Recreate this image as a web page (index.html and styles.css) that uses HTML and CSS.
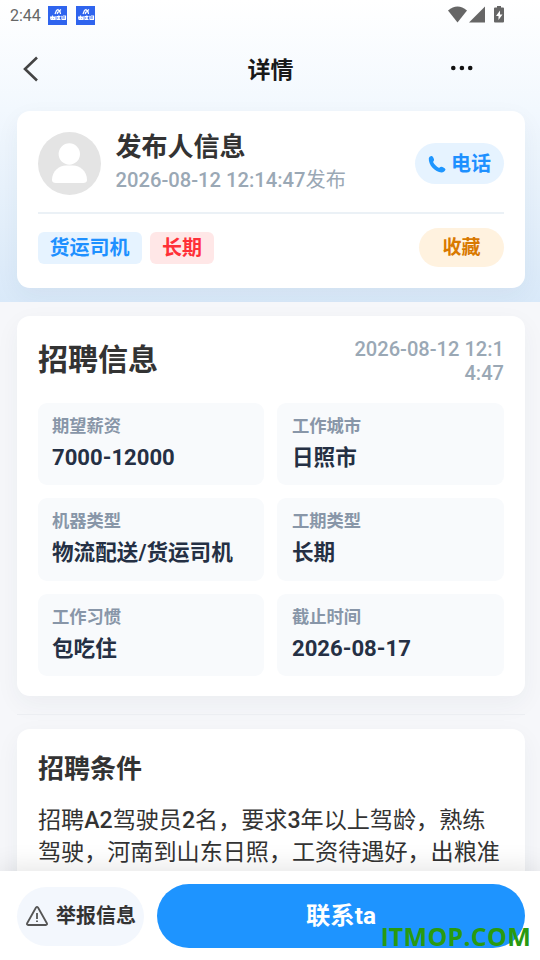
FILE: index.html
```html
<!DOCTYPE html>
<html lang="zh-CN">
<head>
<meta charset="utf-8">
<title>详情</title>
<link rel="stylesheet" href="styles.css">
</head>
<body>
<div class="screen">
  <div class="hero">
    <div class="status">
      <span class="clock">2:44</span>
      <svg class="app" viewBox="0 0 19 19"><use href="#app"/></svg>
      <svg class="app" viewBox="0 0 19 19"><use href="#app"/></svg>
      <svg class="signals" viewBox="0 0 58 18" width="58" height="18" fill="#666">
        <path d="M0 4.500Q9.500 -3.500 19 4.500L9.500 16.500Z"/>
        <path d="M21 16.500H37V.500Z"/>
        <path d="M49 1.500V0h4v1.500h2q1 0 1 1V15.500q0 1-1 1h-8q-1 0-1-1V2.500q0-1 1-1Z"/>
        <path d="M52 4.500L48 10h2.500v4L54.500 8.500H52Z" fill="#fff"/>
      </svg>
    </div>
    <div class="nav">
      <svg class="back" viewBox="0 0 16 26" width="16" height="26" fill="none" stroke="#444" stroke-width="2.600"><path d="M14 1.500L2 13L14 24.500"/></svg>
      <h1>详情</h1>
      <svg class="more" viewBox="0 0 24 6" width="24" height="6" fill="#111"><circle cx="3.300" cy="3" r="2.300"/><circle cx="11.900" cy="3" r="2.300"/><circle cx="20.200" cy="3" r="2.300"/></svg>
    </div>
    <section class="card publisher">
      <div class="person">
        <svg class="avatar" viewBox="0 0 63 63" width="63" height="63"><circle cx="31.500" cy="31.500" r="31.500" fill="#e4e4e4"/><circle cx="31.300" cy="22" r="10.700" fill="#fff"/><path d="M14 48C14 39 21 33.500 28 33.500H35C42 33.500 49 39 49 48Q49 51 45 51H18Q14 51 14 48Z" fill="#fff"/></svg>
        <div class="who"><h2>发布人信息</h2><p>2026-08-12 12:14:47<span>发布</span></p></div>
        <button class="phone"><svg viewBox="0 0 18 18" width="18" height="18" fill="#1e96ff"><path d="M.8 3.200C1.500 1.200 3.500.400 4.300 1.200C5.500 2.600 6.300 4.200 6 5.200C5.800 6 5 6.300 5.200 7.200C6 9 8.700 11.800 10.700 12.800C11.700 13.100 12 11.900 13.100 11.800C14.600 11.700 17.300 13.500 17.500 14.500C17.300 16 15.500 17.500 13.500 17.500C7 17 .3 10 .8 3.200Z"/></svg>电话</button>
      </div>
      <div class="tags"><span class="tag">货运司机</span><span class="tag red">长期</span><button class="favorite">收藏</button></div>
    </section>
  </div>
  <section class="card job">
    <header><h2>招聘信息</h2><time>2026-08-12 12:14:47</time></header>
    <div class="facts">
      <div class="fact"><span>期望薪资</span><b class="figure">7000-12000</b></div>
      <div class="fact"><span>工作城市</span><b>日照市</b></div>
      <div class="fact"><span>机器类型</span><b>物流配送/货运司机</b></div>
      <div class="fact"><span>工期类型</span><b>长期</b></div>
      <div class="fact"><span>工作习惯</span><b>包吃住</b></div>
      <div class="fact"><span>截止时间</span><b class="figure">2026-08-17</b></div>
    </div>
  </section>
  <hr>
  <section class="card terms">
    <h2>招聘条件</h2>
    <p>招聘<i>A2</i>驾驶员<i>2</i>名，要求<i>3</i>年以上驾龄，熟练驾驶，河南到山东日照，工资待遇好，出粮准</p>
  </section>
  <footer>
    <button class="report"><svg viewBox="0 0 22 20" width="22" height="20" fill="none" stroke="#555" stroke-width="1.800" stroke-linejoin="round"><path d="M10 1.500Q11 .300 12 1.500L21 17.500Q21.200 19 20 19H2Q.8 19 1 17.500Z"/><path d="M11 7V13M11 14.500V16"/></svg>举报信息</button>
    <button class="contact">联系ta</button>
  </footer>
  <div class="watermark"><span>I</span>TMOP.COM</div>
</div>
<svg width="0" height="0" class="defs"><defs><g id="app"><rect width="19" height="19" fill="#2f64ee"/><g fill="none" stroke="#fff" stroke-width="1.200"><path d="M7 8L8.500 4.500L10 3.500L11 5L13 3.500M9 6.500L12 5.500L12.500 8M9 8L10 6.500"/><path d="M2 11H7M4.500 9.500V13M2.800 13.500V12H6.500V13.500H2.800M8 10V14M9 10.500H12.500M9 13.500H12.500M9 12H12M10.800 9.500V14M13.500 10L14.500 11M13.500 13.500H18M15 10H17.500V13M15 12H17.500M14 11V13"/></g></g></defs></svg>
</body>
</html>
```
FILE: styles.css
```css
* { box-sizing: border-box; margin: 0; padding: 0; }
body { width: 540px; height: 960px; overflow: hidden; font-family: Roboto, "Noto Sans CJK SC", sans-serif; color: #333; background: #f6f7fa; }
button { border: 0; font: inherit; line-height: 30px; display: flex; align-items: center; justify-content: center; }
h1, h2 { font-weight: 700; }
.defs { position: absolute; }
.screen { position: relative; height: 960px; overflow: hidden; }
.hero { height: 302px; padding: 0 15px 0 17px; background: linear-gradient(#fff 0, #f2f8fe 110px, #d9e9f9 302px); overflow: hidden; }
.status { display: flex; height: 32px; align-items: center; margin-left: -7px; }
.clock { font-size: 16px; color: #666; width: 38px; margin-top: -1px; }
.app { width: 19px; height: 19px; margin-right: 9px; margin-top: -1px; }
.signals { margin-left: auto; margin-right: 19px; margin-top: -3px; }
.nav { display: grid; grid-template-columns: 1fr auto 1fr; height: 79px; align-items: center; padding: 0 51px 4px 6px; }
.back { margin-top: -2px; }
.nav h1 { font-size: 23px; line-height: 30px; color: #1a1a1a; font-weight: 700; transform: translate(22px, 1px); }
.more { justify-self: end; margin-top: -3px; }
.card { background: #fff; border-radius: 13px; width: 508px; padding: 21px; box-shadow: 0 8px 24px rgba(30, 50, 80, .05); }
.publisher { height: 177px; }
.person { display: flex; height: 82px; border-bottom: 2px solid #ebf1f6; align-items: flex-start; }
.who { margin-left: 14.500px; flex: 1; white-space: nowrap; }
.who h2 { font-size: 26px; line-height: 32px; margin-top: -1px; }
.who p { font-size: 20.200px; line-height: 24px; margin-top: 5px; color: #9aa8b5; font-weight: 500; }
.who p span { font-weight: 400; }
.phone { width: 89px; height: 41px; margin-top: 11px; border-radius: 21px; color: #1e90ff; background: #e6f3ff; font-size: 20px; font-weight: 700; gap: 5px; }
.tags { display: flex; height: 67px; align-items: center; gap: 8px; }
.tag { height: 32px; line-height: 32px; padding: 0 12px 0 11.500px; width: 104px; white-space: nowrap; border-radius: 6px; font-size: 20px; font-weight: 700; color: #1e90ff; background: #e6f3ff; }
.red { color: #ff3038; background: #ffe7e7; width: 64px; padding: 0 12px; }
.favorite { width: 85px; height: 39px; border-radius: 20px; margin-left: auto; color: #d97900; background: #fff2df; font-size: 19px; font-weight: 700; }
.job { margin: 14px 0 0 17px; height: 380px; }
.job header { display: flex; justify-content: space-between; height: 66px; }
.job h2 { font-size: 30px; line-height: 46px; }
time { width: 155px; font-size: 20.100px; line-height: 24px; color: #9aa8b5; text-align: right; word-break: break-all; font-weight: 500; }
.facts { display: grid; grid-template-columns: 226px 1fr; gap: 13px; grid-auto-rows: 82.400px; }
.fact { border-radius: 9px; background: #f8fafc; padding: 10px 14px; display: flex; flex-direction: column; }
.fact:nth-child(even) { padding-left: 15px; }
.fact span { font-size: 17.300px; line-height: 26px; color: #8896a8; font-weight: 700; }
.fact b { font-size: 21.600px; line-height: 32px; margin-top: 3px; color: #253044; font-weight: 700; }
.fact .figure { font-size: 22.100px; margin-top: 2px; }
hr { border: 0; height: 1px; background: #eceef2; margin: 18px 15px 14px 17px; }
.terms { margin-left: 17px; height: 190px; }
.terms h2 { font-size: 26px; line-height: 38px; }
.terms p { font-size: 23.100px; line-height: 32px; margin: 17px -3px 0 0; width: 469px; }
.terms i { font-style: normal; font-weight: 500; }
footer { position: absolute; left: 0; right: 0; top: 871px; height: 89px; background: #fff; display: flex; align-items: flex-start; gap: 13px; padding: 13px 15px 0 17px; box-shadow: 0 -4px 24px rgba(0, 0, 0, .1); }
.report { width: 127px; height: 59px; margin-top: 3px; border-radius: 30px; background: #f3f7fd; color: #333; font-size: 20px; font-weight: 700; gap: 8px; white-space: nowrap; padding: 0 0 1px 1px; }
.contact { flex: 1; height: 64px; border-radius: 32px; color: #fff; background: #1e94ff; font-size: 24.300px; font-weight: 700; padding-bottom: 1px; }
.watermark { position: absolute; left: 381px; top: 919px; font: 700 25px/34px "Open Sans", sans-serif; letter-spacing: .25px; color: #299a10; white-space: nowrap; }
.watermark span { font-family: Lato, sans-serif; font-weight: 900; }
```
